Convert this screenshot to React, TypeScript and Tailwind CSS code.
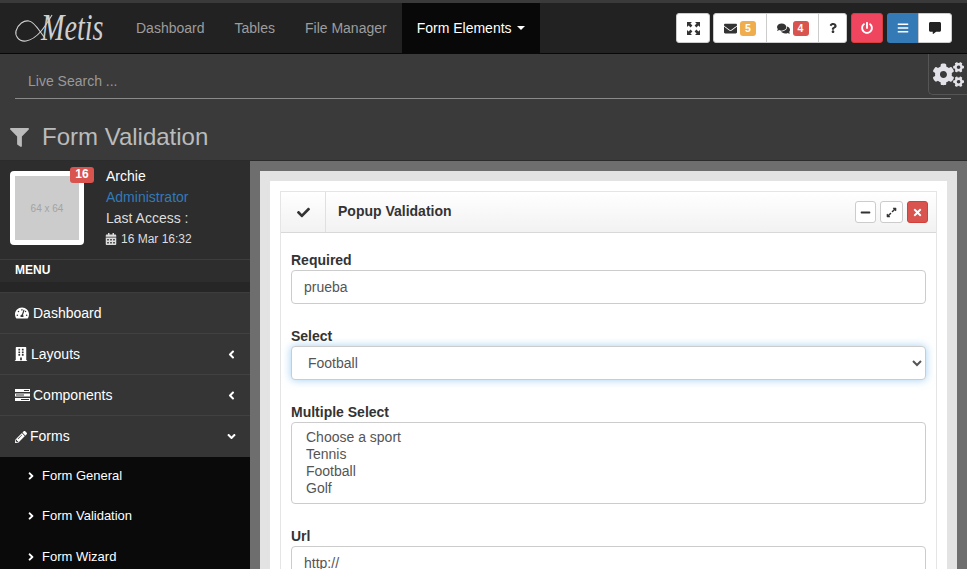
import React from "react";
import {
  FaFilter, FaEnvelope, FaComments, FaQuestion, FaPowerOff, FaBars, FaCommentAlt, FaCogs, FaCheck, FaMinus, FaTimes,
  FaTachometerAlt, FaBuilding, FaPencilAlt, FaAngleLeft, FaAngleDown, FaAngleRight, FaCalendarAlt, FaExpandAlt,
} from "react-icons/fa";

function Logo() {
  return (
    <div className="relative w-[100px] h-[50px] text-[#cfcfcf]">
      <svg className="absolute left-0 top-0" width="60" height="50" viewBox="0 0 60 50" fill="none" stroke="currentColor" strokeWidth="1.1">
        <path d="M52 12C46 22 38 36 26 38C18 39 15 32 16 28C18 21 24 17 29 18C35 19 39 28 45 35" />
      </svg>
      <span className="absolute left-[41px] top-[5px] text-[37px] leading-[40px] italic [font-family:'Liberation_Serif',serif] scale-x-[0.76] origin-left">Metis</span>
    </div>
  );
}

function CornersIcon() {
  return (
    <svg width="13" height="13" viewBox="0 0 13 13" fill="#333">
      <path d="M0 0h5L3.4 1.6 5.4 3.6 3.6 5.4 1.6 3.4 0 5z" />
      <path d="M13 0v5L11.4 3.4 9.4 5.4 7.6 3.6 9.6 1.6 8 0z" />
      <path d="M0 13V8l1.6 1.6 2-2 1.8 1.8-2 2L5 13z" />
      <path d="M13 13H8l1.6-1.6-2-2 1.8-1.8 2 2L13 8z" />
    </svg>
  );
}

function TasksIcon() {
  return (
    <svg width="15" height="12" viewBox="0 0 15 12">
      <rect x="0" y="0" width="15" height="3" fill="#fff" />
      <rect x="0" y="4.5" width="15" height="3" fill="#fff" />
      <rect x="0" y="9" width="15" height="3" fill="#fff" />
      <rect x="9" y="1" width="5" height="1" fill="#333" />
      <rect x="1" y="5.5" width="8" height="1" fill="#333" />
      <rect x="6" y="10" width="8" height="1" fill="#333" />
    </svg>
  );
}

function NavLink({ children }: { children: React.ReactNode }) {
  return <a className="px-[15px] leading-[50px] text-[14px] text-[#9d9d9d]">{children}</a>;
}

function MenuRow({ icon, label, arrow, border = true }: { icon: React.ReactNode; label: string; arrow?: React.ReactNode; border?: boolean }) {
  return (
    <div className={`h-[41px] flex items-center pl-[15px] pr-[12px] text-[14px] text-white ${border ? "border-b border-[#414141]" : ""}`}>
      <span className="flex items-center mr-[3px]">{icon}</span>
      <span className="flex-1">{label}</span>
      {arrow}
    </div>
  );
}

function SubRow({ label, h }: { label: string; h: string }) {
  return (
    <div className={`${h} flex items-center pl-[25px] text-[13px] text-white`}>
      <FaAngleRight className="text-[12px] mr-[5px]" />
      <span>{label}</span>
    </div>
  );
}

const inputCls = "block w-full h-[34px] rounded-[4px] border border-[#ccc] bg-white px-3 text-[14px] text-[#555] outline-none";
const labelCls = "block text-[14px] font-bold leading-[20px] text-[#333]";

export default function App() {
  return (
    <div className="w-[967px] h-[569px] overflow-hidden bg-[#3a3a3a] relative [font-family:'Liberation_Sans',Arial,sans-serif]">
      <div className="h-[3px] bg-[#3a3a3a]" />
      <nav className="h-[51px] bg-[#222] border-b border-[#080808] flex items-start">
        <div className="h-[50px] w-[121px]"><Logo /></div>
        <NavLink>Dashboard</NavLink>
        <NavLink>Tables</NavLink>
        <NavLink>File Manager</NavLink>
        <a className="px-[15px] h-[50px] leading-[50px] text-[14px] text-white bg-[#080808] flex items-center">
          Form Elements
          <span className="ml-[5px] w-0 h-0 border-x-[4px] border-x-transparent border-t-[4px] border-t-white" />
        </a>
        <div className="ml-auto mr-[15px] mt-[10px] flex h-[30px] text-[#333]">
          <button className="w-[34px] h-[30px] bg-white rounded-[3px] border border-[#ccc] flex items-center justify-center"><CornersIcon /></button>
          <div className="ml-[3px] flex h-[30px] bg-white rounded-[3px] border border-[#ccc] text-[12px] font-bold">
            <div className="w-[53px] flex items-center justify-center gap-[3px] border-r border-[#ccc]"><FaEnvelope className="text-[13px]" /><span className="bg-[#f0ad4e] text-white rounded-[3px] w-[16px] h-[15px] text-[10.5px] leading-[15px] text-center">5</span></div>
            <div className="w-[52px] flex items-center justify-center gap-[3px] border-r border-[#ccc]"><FaComments className="text-[13px]" /><span className="bg-[#d9534f] text-white rounded-[3px] w-[16px] h-[15px] text-[10.5px] leading-[15px] text-center">4</span></div>
            <div className="w-[27px] flex items-center justify-center"><FaQuestion className="text-[10px]" /></div>
          </div>
          <button className="ml-[4px] w-[32px] h-[30px] bg-[#f0455f] rounded-[3px] border border-[#d43f3a] text-white flex items-center justify-center"><FaPowerOff className="text-[12px]" /></button>
          <div className="ml-[4px] flex h-[30px]">
            <button className="w-[31px] bg-[#337ab7] rounded-l-[3px] text-white flex items-center justify-center"><FaBars className="text-[12px]" /></button>
            <button className="w-[34px] bg-white rounded-r-[3px] border border-[#ccc] flex items-center justify-center"><FaCommentAlt className="text-[12px] text-[#222]" /></button>
          </div>
        </div>
      </nav>

      <div className="h-[107px] bg-[#3a3a3a] border-b border-[#2b2b2b]">
        <div className="pt-[10px] pl-[15px] pr-[16px]">
          <div className="h-[35px] border-b border-[#8a8a8a] pl-[13px] text-[14px] leading-[34px] text-[#999]">Live Search ...</div>
        </div>
        <div className="flex items-center pl-[10px] mt-[25px] text-[#bbb]">
          <FaFilter className="text-[19px] mr-[13px]" />
          <h1 className="text-[24px] leading-[26px] font-normal">Form Validation</h1>
        </div>
      </div>

      <div className="absolute right-0 top-[54px] w-[39px] h-[41px] rounded-bl-[5px] border-l border-b border-[#555] bg-[#3a3a3a] flex items-center justify-center text-[#e2e2e8]">
        <FaCogs className="text-[31px]" />
      </div>

      <div className="flex h-[408px] overflow-hidden">
        <aside className="w-[250px] shrink-0 bg-[#353535]">
          <div className="h-[99px] bg-[#2d2d2d] border-b border-[#3d3d3d] flex pl-[10px] pt-[10px]">
            <div className="relative w-[74px] h-[74px] bg-white rounded-[4px] p-[5px] shrink-0">
              <div className="w-[64px] h-[64px] bg-[#ccc] flex items-center justify-center text-[10px] text-[#a3a3a3]">64 x 64</div>
              <span className="absolute top-[-4px] left-[60px] w-[24px] h-[16px] rounded-[3px] bg-[#d9534f] text-white text-[12px] font-bold leading-[14px] text-center">16</span>
            </div>
            <div className="ml-[22px] -mt-[5px] text-[14px] text-[#ddd]">
              <div className="leading-[20px] text-white">Archie</div>
              <div className="leading-[21px] mt-[1px] text-[#337ab7]">Administrator</div>
              <div className="leading-[20px]">Last Access :</div>
              <div className="flex items-center text-[12px] leading-[20px] mt-[1px]"><FaCalendarAlt className="text-[12px] mr-[4px] -ml-[1px]" />16 Mar 16:32</div>
            </div>
          </div>
          <div className="h-[22px] bg-[#2d2d2d] pl-[15px] text-[12px] font-bold leading-[20px] text-white">MENU</div>
          <div className="h-[11px] bg-[#262626] border-b border-[#3d3d3d]" />
          <MenuRow icon={<FaTachometerAlt className="text-[14px] mr-[1px]" />} label="Dashboard" />
          <MenuRow icon={<FaBuilding className="text-[14px] -ml-[1px]" />} label="Layouts" arrow={<FaAngleLeft className="text-[13px]" />} />
          <MenuRow icon={<TasksIcon />} label="Components" arrow={<FaAngleLeft className="text-[13px]" />} />
          <MenuRow icon={<FaPencilAlt className="text-[12px]" />} label="Forms" arrow={<FaAngleDown className="text-[13px]" />} border={false} />
          <div className="bg-[#0a0a0a] h-[120px] overflow-hidden">
            <SubRow label="Form General" h="h-[38px] mb-[1px]" />
            <SubRow label="Form Validation" h="h-[40px]" />
            <SubRow label="Form Wizard" h="h-[41px]" />
          </div>
        </aside>

        <main className="flex-1 bg-[#6e6e6e] pt-[10px] px-[10px] overflow-hidden">
          <div className="bg-[#e3e3e3] p-[10px] h-[520px]">
            <div className="bg-white px-[10px] pt-[10px] h-full">
              <div className="border-x border-t border-[#e5e5e5] h-full">
                <header className="h-[41px] border-b border-[#d8d8d8] flex items-center bg-gradient-to-b from-white to-[#f2f2f2] text-[#333]">
                  <div className="w-[45px] h-full border-r border-[#e0e0e0] flex items-center justify-center"><FaCheck className="text-[13px]" /></div>
                  <h5 className="ml-[12px] -mt-[1px] text-[14px] font-bold flex-1">Popup Validation</h5>
                  <div className="flex gap-[4px] mr-[8px]">
                    <button className="w-[21px] h-[22px] bg-white border border-[#ccc] rounded-[3px] flex items-center justify-center"><FaMinus className="text-[11px]" /></button>
                    <button className="w-[23px] h-[22px] bg-white border border-[#ccc] rounded-[3px] flex items-center justify-center"><FaExpandAlt className="text-[11px]" /></button>
                    <button className="w-[21px] h-[22px] bg-[#d9534f] border border-[#d43f3a] rounded-[3px] text-white flex items-center justify-center"><FaTimes className="text-[11px]" /></button>
                  </div>
                </header>
                <div className="px-[10px] pt-[17px]">
                  <label className={labelCls}>Required</label>
                  <input className={inputCls + " mb-[22px]"} defaultValue="prueba" />
                  <label className={labelCls}>Select</label>
                  <select className={inputCls + " mb-[22px] border-[#66afe9] shadow-[0_0_8px_rgba(102,175,233,0.6)]"} defaultValue="Football">
                    <option>Choose a sport</option>
                    <option>Tennis</option>
                    <option>Football</option>
                    <option>Golf</option>
                  </select>
                  <label className={labelCls}>Multiple Select</label>
                  <select multiple size={4} className="block w-full h-[82px] rounded-[4px] border border-[#ccc] bg-white px-[14px] py-[6px] text-[14px] text-[#555] outline-none mb-[22px] overflow-hidden [&>option]:text-[#555] [&>option]:min-h-[17px] [&>option]:p-0 [&>option]:leading-[17px]">
                    <option>Choose a sport</option>
                    <option>Tennis</option>
                    <option>Football</option>
                    <option>Golf</option>
                  </select>
                  <label className={labelCls}>Url</label>
                  <input className={inputCls} defaultValue="http://" />
                </div>
              </div>
            </div>
          </div>
        </main>
      </div>
    </div>
  );
}
